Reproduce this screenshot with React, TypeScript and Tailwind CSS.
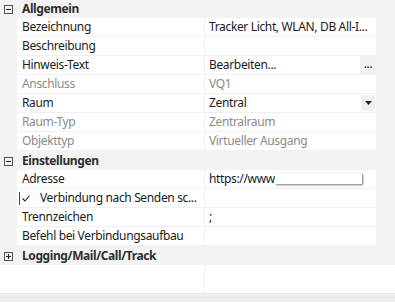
import React from "react";

const FONT = { fontFamily: '"Noto Sans", "Open Sans", sans-serif' };

function Box({ minus }: { minus: boolean }) {
  return (
    <div className="relative w-[9px] h-[9px] border border-[#555]">
      <div className="absolute left-[1px] top-[3px] w-[5px] h-[1px] bg-[#222]" />
      {!minus && <div className="absolute left-[3px] top-[1px] w-[1px] h-[5px] bg-[#222]" />}
    </div>
  );
}

function Header({ label, open, first }: { label: string; open: boolean; first?: boolean }) {
  return (
    <div className={`flex items-center bg-[#f3f3f3] ${first ? "h-[18px]" : "h-[19px] pt-[1px]"}`}>
      <div className="w-[17px] flex justify-center">
        <Box minus={open} />
      </div>
      <div className="pl-[5px] text-[12px] font-bold text-[#2e2e2e] leading-none tracking-[-0.4px]">{label}</div>
    </div>
  );
}

function Row({
  name,
  value,
  disabled,
  extra,
  check,
  valueNode,
}: {
  name: string;
  value?: string;
  disabled?: boolean;
  extra?: "dots" | "drop";
  check?: boolean;
  valueNode?: React.ReactNode;
}) {
  const tc = disabled ? "text-[#8a8a8a]" : "text-[#1b1b1b]";
  return (
    <div className="flex h-[19px]">
      <div className="w-[17px] bg-[#f3f3f3]" />
      <div className="flex w-[359px] border-b border-[#f0f0f0] bg-white">
        <div className={`w-[187px] flex items-center pl-[5px] text-[12px] whitespace-nowrap overflow-hidden tracking-[-0.35px] ${tc}`}>
          {check && (
            <div className="w-[13px] h-[13px] mr-[8px] ml-[-3px] border-l border-[#444] flex items-center justify-center">
              <svg width="10" height="10" viewBox="0 0 10 10">
                <path d="M1.5 5.5 L4 8 L8.5 2.5" fill="none" stroke="#222" strokeWidth="1.1" />
              </svg>
            </div>
          )}
          {name}
        </div>
        <div className="w-[1px] bg-[#f0f0f0]" />
        <div className={`relative flex-1 flex items-center pl-[4px] text-[12px] whitespace-nowrap overflow-hidden tracking-[-0.35px] ${tc}`}>
          {value}
          {valueNode}
          {extra === "dots" && (
            <div className="absolute right-0 top-0 w-[16px] h-[18px] bg-[#f0f0f0] flex items-center justify-center text-[12px] text-[#222] leading-none pb-[2px]">
              ...
            </div>
          )}
          {extra === "drop" && (
            <div className="absolute right-[1px] top-[1px] w-[14px] h-[16px] bg-[#efefef] flex items-center justify-center">
              <svg width="7" height="4" viewBox="0 0 7 4">
                <path d="M0 0 L7 0 L3.5 4 Z" fill="#222" />
              </svg>
            </div>
          )}
        </div>
      </div>
      <div className="w-[19px] bg-[#f3f3f3]" />
    </div>
  );
}

export default function App() {
  return (
    <div className="w-[395px] h-[302px] bg-white overflow-hidden flex flex-col" style={FONT}>
      <Header label="Allgemein" open first />
      <Row name="Bezeichnung" value="Tracker Licht, WLAN, DB All-I..." />
      <Row name="Beschreibung" />
      <Row name="Hinweis-Text" value="Bearbeiten..." extra="dots" />
      <Row name="Anschluss" value="VQ1" disabled />
      <Row name="Raum" value="Zentral" extra="drop" />
      <Row name="Raum-Typ" value="Zentralraum" disabled />
      <Row name="Objekttyp" value="Virtueller Ausgang" disabled />
      <Header label="Einstellungen" open />
      <Row
        name="Adresse"
        valueNode={
          <>
            <span>https://www</span>
            <div className="absolute left-[70px] top-[3px] w-[87px] h-[11px] bg-white shadow-[1px_1px_2px_rgba(0,0,0,0.55)]" />
          </>
        }
      />
      <Row name="Verbindung nach Senden sc..." check />
      <Row name="Trennzeichen" value=";" />
      <Row name="Befehl bei Verbindungsaufbau" />
      <Header label="Logging/Mail/Call/Track" open={false} />
      <div className="flex h-[28px]">
        <div className="w-[204px]" />
        <div className="w-[1px] bg-[#f0f0f0]" />
        <div className="flex-1" />
      </div>
      <div className="flex-1 bg-[#f0f0f0] border-t border-[#e6e6e6] pt-[3px]">
        <div className="h-[1px] bg-[#e3e3e3]" />
      </div>
    </div>
  );
}
